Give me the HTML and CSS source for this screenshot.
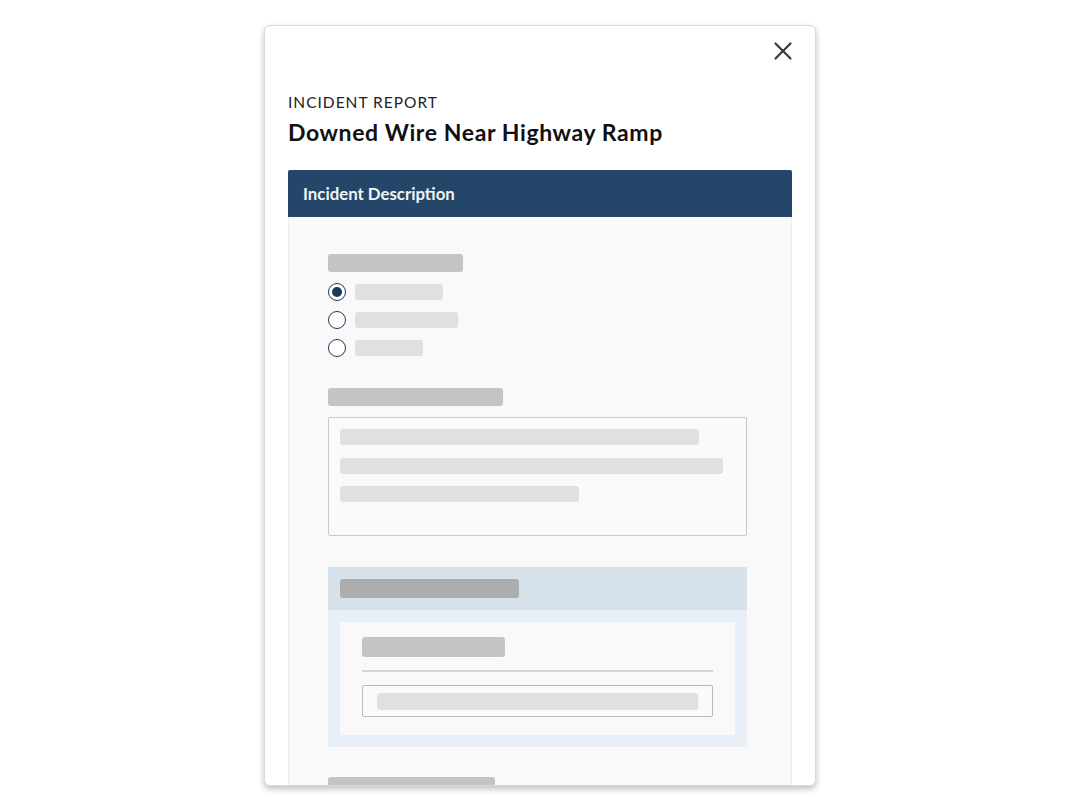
FILE: index.html
```html
<!DOCTYPE html>
<html lang="en">
<head>
<meta charset="utf-8">
<title>Incident Report</title>
<link rel="stylesheet" href="styles.css">
</head>
<body>
<div class="page">
  <div class="card">
    <div class="close-row">
      <button class="close" aria-label="Close">
        <svg width="24" height="24" viewBox="0 0 24 24"><path d="M4.5 4.5 L19.5 19.5 M19.5 4.5 L4.5 19.5" stroke="#3a3a3a" stroke-width="2.2" stroke-linecap="round" fill="none"/></svg>
      </button>
    </div>
    <div class="eyebrow">INCIDENT REPORT</div>
    <h1 class="title">Downed Wire Near Highway Ramp</h1>
    <div class="panel">
      <div class="panel-head">Incident Description</div>
      <div class="panel-body">
        <div class="sk label w135"></div>
        <div class="radios">
          <div class="radio-row"><span class="radio checked"></span><span class="sk opt w88"></span></div>
          <div class="radio-row"><span class="radio"></span><span class="sk opt w103"></span></div>
          <div class="radio-row"><span class="radio"></span><span class="sk opt w68"></span></div>
        </div>
        <div class="sk label w175 mt26"></div>
        <div class="textarea">
          <div class="sk line w359"></div>
          <div class="sk line w383"></div>
          <div class="sk line w239"></div>
        </div>
        <div class="section">
          <div class="section-head"><div class="sk head-bar"></div></div>
          <div class="section-body">
            <div class="inner">
              <div class="sk inner-label"></div>
              <div class="divider"></div>
              <div class="input"><div class="sk input-bar"></div></div>
            </div>
          </div>
        </div>
        <div class="sk label w167 mt30"></div>
      </div>
    </div>
  </div>
</div>
</body>
</html>
```
FILE: styles.css
```css
html, body {
  margin: 0;
  padding: 0;
  background: #ffffff;
  font-family: Lato, "Liberation Sans", sans-serif;
}
.page {
  display: flex;
  justify-content: center;
  padding-top: 25px;
  height: 810px;
  box-sizing: border-box;
  overflow: hidden;
}
.card {
  width: 552px;
  height: 761px;
  box-sizing: border-box;
  border: 1px solid #d9d9d9;
  border-radius: 6px;
  background: #ffffff;
  box-shadow: 0 3px 6px rgba(0, 0, 0, 0.25);
  padding: 13px 23px 0;
  overflow: hidden;
}
.close-row {
  display: flex;
  justify-content: flex-end;
  margin-right: -3px;
}
.close {
  width: 24px;
  height: 24px;
  padding: 0;
  border: 0;
  background: none;
  display: flex;
  align-items: center;
  justify-content: center;
}
.eyebrow {
  margin-top: 29px;
  font-size: 15.5px;
  line-height: 20px;
  letter-spacing: 1px;
  color: #222222;
}
.title {
  margin: 6px 0 0;
  font-size: 23px;
  line-height: 28px;
  letter-spacing: 0.6px;
  font-weight: 700;
  color: #111111;
}
.panel {
  margin-top: 24px;
}
.panel-head {
  height: 47px;
  background: #244669;
  color: #f2f4f7;
  font-weight: 700;
  font-size: 16.8px;
  display: flex;
  align-items: center;
  padding-left: 15px;
  border-radius: 2px 2px 0 0;
}
.panel-body {
  background: #f9f9f9;
  border-left: 1px solid #ececec;
  border-right: 1px solid #ececec;
  padding: 37px 44px 0 39px;
  height: 600px;
}
.sk {
  display: block;
  border-radius: 3px;
}
.label {
  height: 18px;
  background: #c4c4c4;
}
.w135 { width: 135px; }
.w175 { width: 175px; }
.w167 { width: 167px; }
.mt26 { margin-top: 26px; }
.mt30 { margin-top: 30px; }
.radios {
  margin-top: 6px;
}
.radio-row {
  height: 28px;
  display: flex;
  align-items: center;
  gap: 9px;
}
.radio {
  width: 18px;
  height: 18px;
  box-sizing: border-box;
  border: 1.8px solid #1d3a5c;
  border-radius: 50%;
  background: #ffffff;
  display: flex;
  align-items: center;
  justify-content: center;
}
.radio.checked::after {
  content: "";
  width: 10px;
  height: 10px;
  border-radius: 50%;
  background: #1d3a5c;
}
.opt {
  height: 16px;
  background: #e0e0e0;
}
.w88 { width: 88px; }
.w103 { width: 103px; }
.w68 { width: 68px; }
.textarea {
  margin-top: 11px;
  height: 119px;
  box-sizing: border-box;
  border: 1.5px solid #c9c9c9;
  border-radius: 2px;
  background: #fafafa;
  padding: 11px 11px 0;
  display: flex;
  flex-direction: column;
  gap: 12.5px;
}
.line {
  height: 16px;
  background: #e0e0e0;
}
.w359 { width: 359px; }
.w383 { width: 383px; }
.w239 { width: 239px; }
.section {
  margin-top: 31px;
}
.section-head {
  height: 43px;
  background: #d7e1eb;
  padding: 12px 12px 0;
  box-sizing: border-box;
}
.head-bar {
  width: 179px;
  height: 19px;
  background: #adadad;
}
.section-body {
  background: #e9eff6;
  padding: 12px;
}
.inner {
  background: #f9f9f9;
  padding: 15px 22px 18px;
}
.inner-label {
  width: 143px;
  height: 20px;
  background: #c4c4c4;
}
.divider {
  margin-top: 13px;
  height: 2px;
  background: #d4d4d4;
}
.input {
  margin-top: 13px;
  height: 32px;
  box-sizing: border-box;
  border: 1.5px solid #b9b9b9;
  border-radius: 2px;
  background: #fafafa;
  padding: 6.5px 14px 0;
}
.input-bar {
  height: 17px;
  background: #e0e0e0;
}
```
